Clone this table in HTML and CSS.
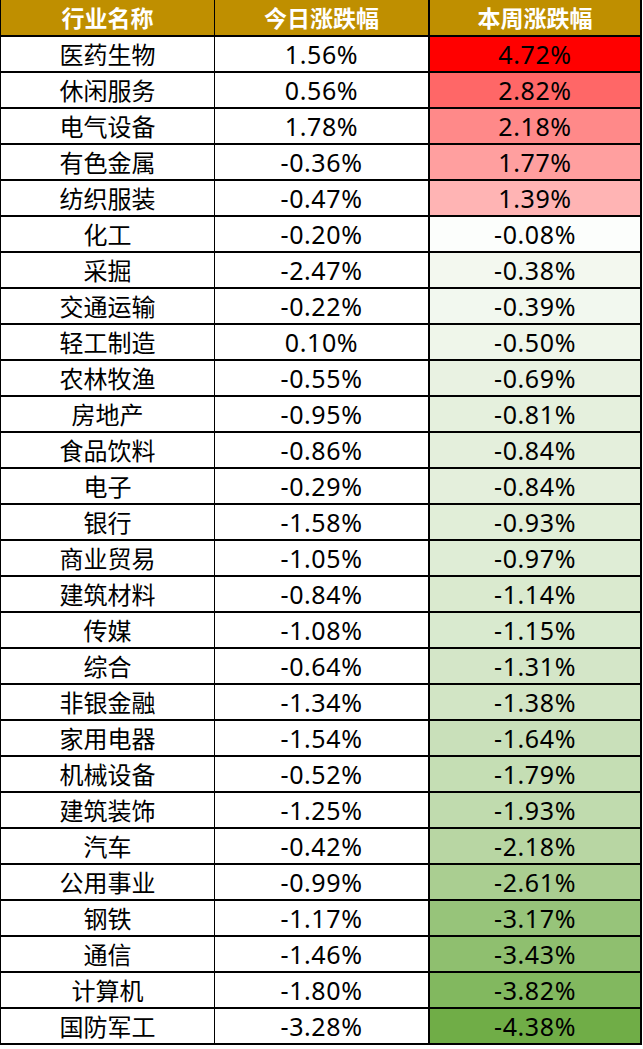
FILE: index.html
```html
<!DOCTYPE html>
<html lang="zh-CN">
<head>
<meta charset="utf-8">
<title>行业涨跌幅</title>
<link rel="stylesheet" href="styles.css">
</head>
<body>
<div class="table">
  <div class="cell head c1">行业名称</div><div class="cell head c2">今日涨跌幅</div><div class="cell head c3">本周涨跌幅</div>
  <div class="cell c1">医药生物</div><div class="cell c2 num">1.56%</div><div class="cell c3 num" style="background:rgb(255,0,0)">4.72%</div>
  <div class="cell c1">休闲服务</div><div class="cell c2 num">0.56%</div><div class="cell c3 num" style="background:rgb(255,103,103)">2.82%</div>
  <div class="cell c1">电气设备</div><div class="cell c2 num">1.78%</div><div class="cell c3 num" style="background:rgb(255,137,137)">2.18%</div>
  <div class="cell c1">有色金属</div><div class="cell c2 num">-0.36%</div><div class="cell c3 num" style="background:rgb(255,159,159)">1.77%</div>
  <div class="cell c1">纺织服装</div><div class="cell c2 num">-0.47%</div><div class="cell c3 num" style="background:rgb(255,180,180)">1.39%</div>
  <div class="cell c1">化工</div><div class="cell c2 num">-0.20%</div><div class="cell c3 num" style="background:rgb(252,254,252)">-0.08%</div>
  <div class="cell c1">采掘</div><div class="cell c2 num">-2.47%</div><div class="cell c3 num" style="background:rgb(243,248,239)">-0.38%</div>
  <div class="cell c1">交通运输</div><div class="cell c2 num">-0.22%</div><div class="cell c3 num" style="background:rgb(242,248,239)">-0.39%</div>
  <div class="cell c1">轻工制造</div><div class="cell c2 num">0.10%</div><div class="cell c3 num" style="background:rgb(239,246,234)">-0.50%</div>
  <div class="cell c1">农林牧渔</div><div class="cell c2 num">-0.55%</div><div class="cell c3 num" style="background:rgb(233,242,226)">-0.69%</div>
  <div class="cell c1">房地产</div><div class="cell c2 num">-0.95%</div><div class="cell c3 num" style="background:rgb(229,240,221)">-0.81%</div>
  <div class="cell c1">食品饮料</div><div class="cell c2 num">-0.86%</div><div class="cell c3 num" style="background:rgb(228,239,220)">-0.84%</div>
  <div class="cell c1">电子</div><div class="cell c2 num">-0.29%</div><div class="cell c3 num" style="background:rgb(228,239,220)">-0.84%</div>
  <div class="cell c1">银行</div><div class="cell c2 num">-1.58%</div><div class="cell c3 num" style="background:rgb(225,238,216)">-0.93%</div>
  <div class="cell c1">商业贸易</div><div class="cell c2 num">-1.05%</div><div class="cell c3 num" style="background:rgb(223,237,214)">-0.97%</div>
  <div class="cell c1">建筑材料</div><div class="cell c2 num">-0.84%</div><div class="cell c3 num" style="background:rgb(218,234,207)">-1.14%</div>
  <div class="cell c1">传媒</div><div class="cell c2 num">-1.08%</div><div class="cell c3 num" style="background:rgb(217,234,207)">-1.15%</div>
  <div class="cell c1">综合</div><div class="cell c2 num">-0.64%</div><div class="cell c3 num" style="background:rgb(212,230,200)">-1.31%</div>
  <div class="cell c1">非银金融</div><div class="cell c2 num">-1.34%</div><div class="cell c3 num" style="background:rgb(210,229,197)">-1.38%</div>
  <div class="cell c1">家用电器</div><div class="cell c2 num">-1.54%</div><div class="cell c3 num" style="background:rgb(201,224,186)">-1.64%</div>
  <div class="cell c1">机械设备</div><div class="cell c2 num">-0.52%</div><div class="cell c3 num" style="background:rgb(197,222,180)">-1.79%</div>
  <div class="cell c1">建筑装饰</div><div class="cell c2 num">-1.25%</div><div class="cell c3 num" style="background:rgb(192,219,174)">-1.93%</div>
  <div class="cell c1">汽车</div><div class="cell c2 num">-0.42%</div><div class="cell c3 num" style="background:rgb(184,214,163)">-2.18%</div>
  <div class="cell c1">公用事业</div><div class="cell c2 num">-0.99%</div><div class="cell c3 num" style="background:rgb(170,206,145)">-2.61%</div>
  <div class="cell c1">钢铁</div><div class="cell c2 num">-1.17%</div><div class="cell c3 num" style="background:rgb(151,196,122)">-3.17%</div>
  <div class="cell c1">通信</div><div class="cell c2 num">-1.46%</div><div class="cell c3 num" style="background:rgb(143,191,111)">-3.43%</div>
  <div class="cell c1">计算机</div><div class="cell c2 num">-1.80%</div><div class="cell c3 num" style="background:rgb(130,184,95)">-3.82%</div>
  <div class="cell c1">国防军工</div><div class="cell c2 num">-3.28%</div><div class="cell c3 num" style="background:rgb(112,173,71)">-4.38%</div>
</div>
</body>
</html>
```
FILE: styles.css
```css
html, body {
  margin: 0;
  padding: 0;
  background: #ffffff;
}
.table {
  display: grid;
  grid-template-columns: 215px 215px 212px;
  grid-template-rows: 37px;
  grid-auto-rows: 36px;
  width: 642px;
  font-family: "Noto Sans CJK SC", "Noto Sans", sans-serif;
  color: #000;
}
.cell {
  box-sizing: border-box;
  display: flex;
  align-items: center;
  justify-content: center;
  border-bottom: 2px solid #000;
  font-size: 24px;
  line-height: 1;
  background: #fff;
}
.c1 {
  border-left: 1px solid #000;
  border-right: 1px solid #000;
}
.c2 {
  border-right: 2px solid #000;
}
.c3 {
  border-right: 2px solid #000;
}
.head {
  background: #bf8f00;
  color: #fff;
  font-weight: 700;
  font-size: 23px;
}
.num {
  font-family: "Noto Sans", "Noto Sans CJK SC", sans-serif;
  font-size: 25px;
  letter-spacing: 0.6px;
}
```
